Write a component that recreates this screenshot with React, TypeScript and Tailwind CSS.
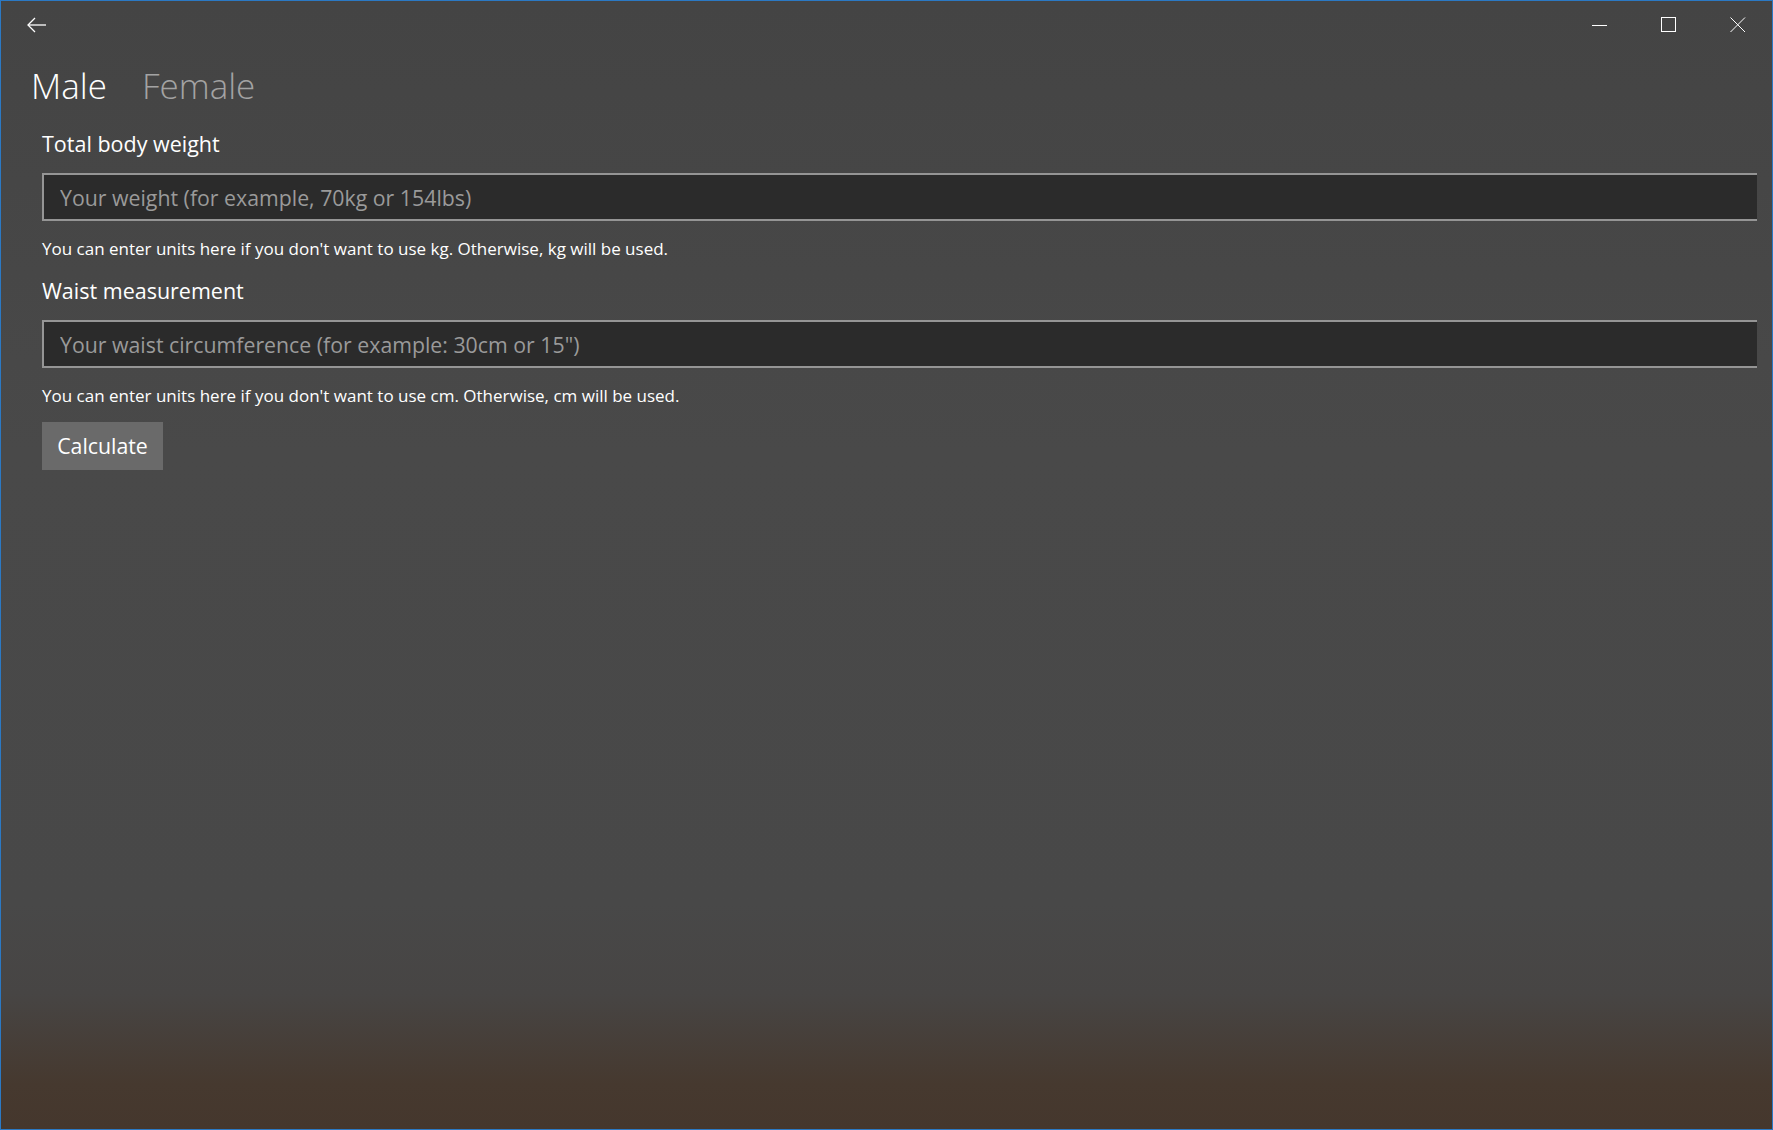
import React from 'react';

const BackArrow: React.FC = () => (
    <svg width="20" height="16" viewBox="0 0 20 16" fill="none" stroke="#ffffff" strokeWidth="1.3">
        <path d="M1 8 H19" />
        <path d="M8 1 L1 8 L8 15" />
    </svg>
);

const CaptionButtons: React.FC = () => (
    <div className="flex h-full">
        <div className="flex w-[69px] items-center justify-center">
            <svg width="16" height="16" viewBox="0 0 16 16" fill="none" stroke="#ffffff" strokeWidth="1">
                <path d="M0 8.5 H15" />
            </svg>
        </div>
        <div className="flex w-[69px] items-center justify-center">
            <svg width="16" height="16" viewBox="0 0 16 16" fill="none" stroke="#ffffff" strokeWidth="1">
                <rect x="0.5" y="0.5" width="14" height="14" />
            </svg>
        </div>
        <div className="flex w-[69px] items-center justify-center">
            <svg width="16" height="16" viewBox="0 0 16 16" fill="none" stroke="#ffffff" strokeWidth="1">
                <path d="M0.5 0.5 L15 15 M15 0.5 L0.5 15" />
            </svg>
        </div>
    </div>
);

interface FieldProps {
    label: string;
    placeholder: string;
    hint: string;
}

const Field: React.FC<FieldProps> = ({ label, placeholder, hint }) => (
    <div className="flex flex-col">
        <p className="text-[21.5px] leading-[28px] text-white">{label}</p>
        <input
            type="text"
            placeholder={placeholder}
            className="mt-[15px] h-[48px] w-full border-2 border-r-0 border-[#959595] bg-[#2b2b2b] pl-[16px] text-[21.3px] text-white outline-none placeholder:text-[#9a9a9a]"
        />
        <p className="mt-[16px] text-[17px] leading-[24px] text-white">{hint}</p>
    </div>
);

export default function App() {
    return (
        <div className="flex h-[1130px] w-full flex-col overflow-hidden border border-[#2b79c4] bg-[linear-gradient(to_bottom,#444444_0%,#494949_40%,#484848_80%,#474544_88%,#46392f_96%,#45372d_100%)] font-['Open_Sans',sans-serif]">
            <div className="flex h-[47px] shrink-0 items-center justify-between">
                <div className="flex h-full w-[72px] items-center justify-center">
                    <BackArrow />
                </div>
                <CaptionButtons />
            </div>

            <div className="mt-[14px] flex items-baseline pl-[30px]">
                <span className="text-[35px] font-light leading-[48px] text-white">Male</span>
                <span className="ml-[35px] text-[35px] font-light leading-[48px] text-[#a3a3a3]">Female</span>
            </div>

            <div className="mt-[20px] flex flex-col pl-[41px] pr-[15px]">
                <Field
                    label="Total body weight"
                    placeholder="Your weight (for example, 70kg or 154lbs)"
                    hint="You can enter units here if you don't want to use kg. Otherwise, kg will be used."
                />
                <div className="mt-[16px]">
                    <Field
                        label="Waist measurement"
                        placeholder={'Your waist circumference (for example: 30cm or 15")'}
                        hint="You can enter units here if you don't want to use cm. Otherwise, cm will be used."
                    />
                </div>
                <button className="mt-[14px] flex h-[48px] w-[121px] items-center justify-center bg-[#6a6a6a] text-[21.3px] text-white">
                    Calculate
                </button>
            </div>
        </div>
    );
}
